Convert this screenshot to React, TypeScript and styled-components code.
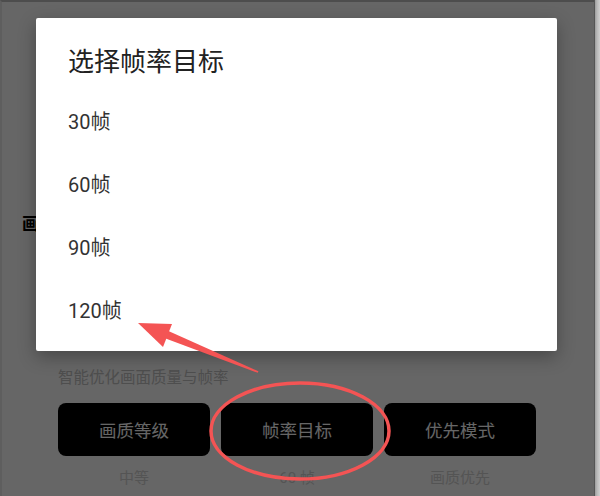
import styled, { createGlobalStyle } from 'styled-components'

const GlobalStyle = createGlobalStyle`
  html, body { margin: 0; padding: 0; background: #666; }
  body { font-family: Roboto, "Noto Sans CJK SC", sans-serif; }
  * { box-sizing: border-box; }
`

const options = ['30帧', '60帧', '90帧', '120帧']

const settings = [
  { title: '画质等级', value: '中等' },
  { title: '帧率目标', value: '60 帧' },
  { title: '优先模式', value: '画质优先' },
]

export default function App() {
  return (
    <>
      <GlobalStyle />
      <Frame>
        <Screen>
          <Page>
            <SectionTitle>画质设置</SectionTitle>
            <Section>
              <Description>智能优化画面质量与帧率</Description>
              <ButtonRow>
                {settings.map((s) => (
                  <SettingButton key={s.title}>{s.title}</SettingButton>
                ))}
              </ButtonRow>
              <ButtonRow>
                {settings.map((s) => (
                  <ValueLabel key={s.title}>{s.value}</ValueLabel>
                ))}
              </ButtonRow>
            </Section>
          </Page>
          <Scrim />
          <Dialog>
            <DialogTitle>选择帧率目标</DialogTitle>
            <OptionList>
              {options.map((o) => (
                <OptionItem key={o}>{o}</OptionItem>
              ))}
            </OptionList>
          </Dialog>
          <Annotation width="594" height="494" viewBox="0 0 594 494">
            {/* coordinates relative to the screen (offset by the 2px top/left border) */}
            <g transform="translate(-2 -2)">
              <ellipse cx="300" cy="431" rx="89" ry="48" fill="none" stroke="#f45454" strokeWidth="3.5" />
              <polygon points="167.3,330.6 164.3,338 257.8,372.8 258.4,371.2" fill="#f45454" />
              <polygon points="138,323 172,324 163,347" fill="#f45454" />
            </g>
          </Annotation>
        </Screen>
        <RightEdge />
      </Frame>
    </>
  )
}

const Frame = styled.div`
  display: flex;
  width: 600px;
  height: 496px;
  overflow: hidden;
`

const Screen = styled.div`
  position: relative;
  flex: 1;
  height: 100%;
  background: #fff;
  border-top: 2px solid #4d4d4d;
  border-left: 2px solid #5e5e5e;
  overflow: hidden;
`

const RightEdge = styled.div`
  width: 6px;
  height: 100%;
  background: linear-gradient(to right, #555 0 1px, #9c9c9c 1px, #b8b8b8 3px, #cfcfcf);
`

const Page = styled.div`
  display: flex;
  flex-direction: column;
  padding-top: 209px;
`

const SectionTitle = styled.div`
  padding-left: 20px;
  font-family: "Noto Sans CJK SC", sans-serif;
  font-size: 17px;
  font-weight: 700;
  line-height: 24px;
  color: #000;
`

const Section = styled.div`
  display: flex;
  flex-direction: column;
  width: 478px;
  margin: 131px 0 0 56px;
`

const Description = styled.div`
  font-family: "Noto Sans CJK SC", sans-serif;
  font-size: 15.5px;
  line-height: 20px;
  color: #c2c2c2;
  margin-bottom: 17px;
`

const ButtonRow = styled.div`
  display: grid;
  grid-template-columns: repeat(3, 1fr);
  gap: 11px;
`

const SettingButton = styled.button`
  height: 53px;
  border: none;
  border-radius: 8px;
  background: #000;
  color: #fff;
  font-family: "Noto Sans CJK SC", sans-serif;
  font-size: 17.5px;
  padding: 0;
`

const ValueLabel = styled.div`
  margin-top: 10px;
  text-align: center;
  font-family: Roboto, "Noto Sans CJK SC", sans-serif;
  font-size: 15px;
  line-height: 24px;
  color: #d2d2d2;
`

const Scrim = styled.div`
  position: absolute;
  inset: 0;
  background: rgba(0, 0, 0, 0.6);
`

const Dialog = styled.div`
  position: absolute;
  left: 34px;
  top: 16px;
  width: 521px;
  height: 333px;
  padding: 24px 32px 10px;
  background: #fff;
  border-radius: 2px;
  box-shadow: 0 6px 18px rgba(0, 0, 0, 0.3);
  display: flex;
  flex-direction: column;
`

const DialogTitle = styled.div`
  font-family: "Noto Sans CJK SC", sans-serif;
  font-size: 26px;
  line-height: 36px;
  color: #222;
`

const OptionList = styled.div`
  display: flex;
  flex-direction: column;
  margin-top: 11px;
`

const OptionItem = styled.div`
  height: 63px;
  display: flex;
  align-items: center;
  font-family: Roboto, "Noto Sans CJK SC", sans-serif;
  font-size: 20px;
  color: #333;
`

const Annotation = styled.svg`
  position: absolute;
  left: 0;
  top: 0;
  pointer-events: none;
`
